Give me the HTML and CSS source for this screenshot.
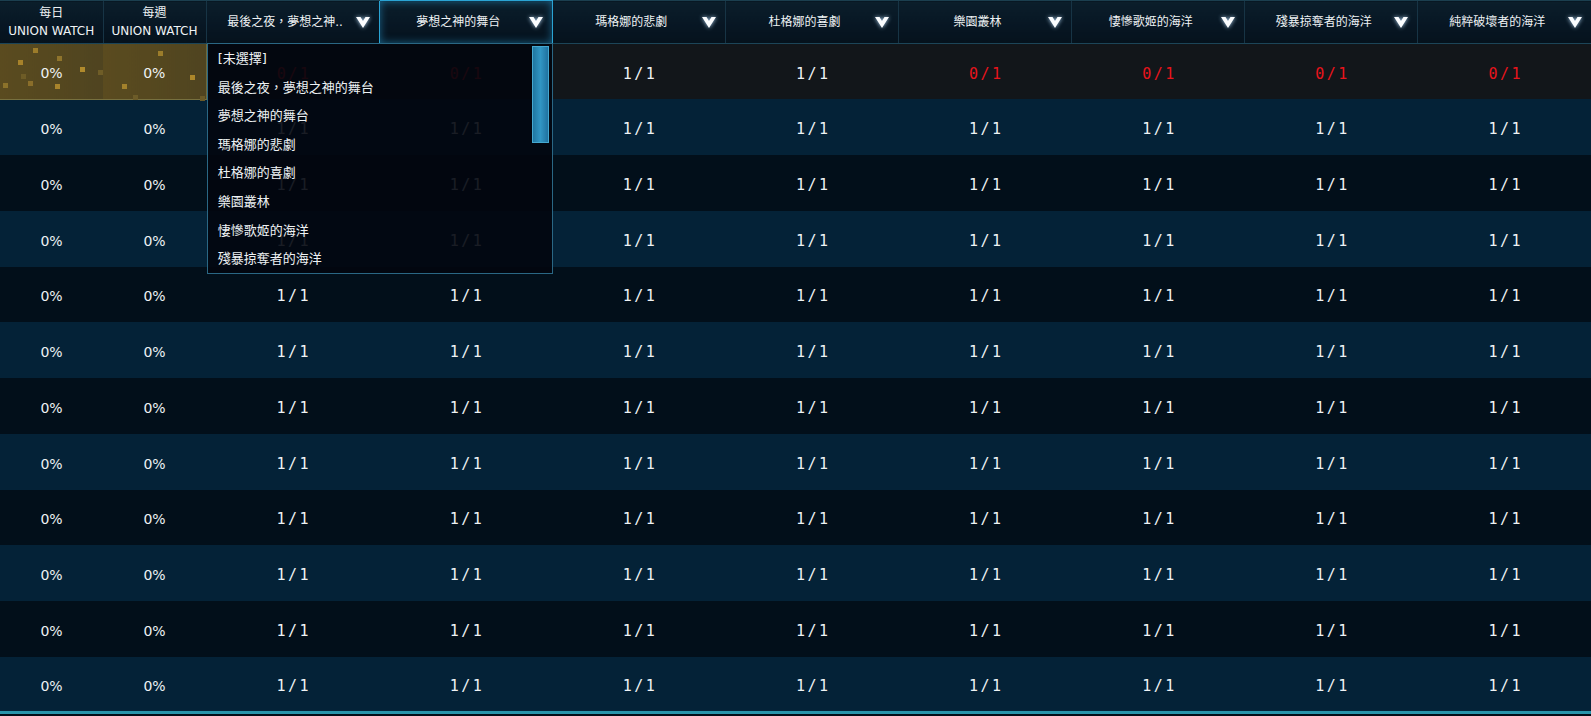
FILE: index.html
```html
<!doctype html>
<html lang="zh-Hant">
	<head>
		<meta charset="utf-8">
		<link rel="stylesheet" href="styles.css">
		<title>Union Watch</title>
	</head>
	<body>
		<div class="board">
			<table class="watch">
				<colgroup>
					<col class="col-small">
					<col class="col-small">
					<col><col><col><col><col><col><col><col>
				</colgroup>
				<thead>
					<tr>
						<th><div class="head two-line"><span>每日</span><span>UNION WATCH</span></div></th>
						<th><div class="head two-line"><span>每週</span><span>UNION WATCH</span></div></th>
						<th><div class="head"><span class="label">最後之夜，夢想之神..</span><svg class="arrow" viewBox="0 0 13 10"><path d="M0 0H4.2L6.5 3.6L8.8 0H13L6.5 10Z"/></svg></div></th>
						<th class="active">
							<div class="head"><span class="label">夢想之神的舞台</span><svg class="arrow" viewBox="0 0 13 10"><path d="M0 0H4.2L6.5 3.6L8.8 0H13L6.5 10Z"/></svg></div>
							<div class="menu">
								<div class="option">[未選擇]</div>
								<div class="option">最後之夜，夢想之神的舞台</div>
								<div class="option">夢想之神的舞台</div>
								<div class="option">瑪格娜的悲劇</div>
								<div class="option">杜格娜的喜劇</div>
								<div class="option">樂園叢林</div>
								<div class="option">悽慘歌姬的海洋</div>
								<div class="option">殘暴掠奪者的海洋</div>
								<div class="scroll-thumb"></div>
							</div>
						</th>
						<th><div class="head"><span class="label">瑪格娜的悲劇</span><svg class="arrow" viewBox="0 0 13 10"><path d="M0 0H4.2L6.5 3.6L8.8 0H13L6.5 10Z"/></svg></div></th>
						<th><div class="head"><span class="label">杜格娜的喜劇</span><svg class="arrow" viewBox="0 0 13 10"><path d="M0 0H4.2L6.5 3.6L8.8 0H13L6.5 10Z"/></svg></div></th>
						<th><div class="head"><span class="label">樂園叢林</span><svg class="arrow" viewBox="0 0 13 10"><path d="M0 0H4.2L6.5 3.6L8.8 0H13L6.5 10Z"/></svg></div></th>
						<th><div class="head"><span class="label">悽慘歌姬的海洋</span><svg class="arrow" viewBox="0 0 13 10"><path d="M0 0H4.2L6.5 3.6L8.8 0H13L6.5 10Z"/></svg></div></th>
						<th><div class="head"><span class="label">殘暴掠奪者的海洋</span><svg class="arrow" viewBox="0 0 13 10"><path d="M0 0H4.2L6.5 3.6L8.8 0H13L6.5 10Z"/></svg></div></th>
						<th><div class="head"><span class="label">純粹破壞者的海洋</span><svg class="arrow" viewBox="0 0 13 10"><path d="M0 0H4.2L6.5 3.6L8.8 0H13L6.5 10Z"/></svg></div></th>
					</tr>
				</thead>
				<tbody>
					<tr class="current">
						<td class="pct gold dots">0%</td><td class="pct gold">0%</td>
						<td class="miss">0/1</td><td class="miss">0/1</td><td>1/1</td><td>1/1</td>
						<td class="miss">0/1</td><td class="miss">0/1</td><td class="miss">0/1</td><td class="miss">0/1</td>
					</tr>
					<tr><td class="pct">0%</td><td class="pct">0%</td><td>1/1</td><td>1/1</td><td>1/1</td><td>1/1</td><td>1/1</td><td>1/1</td><td>1/1</td><td>1/1</td></tr>
					<tr><td class="pct">0%</td><td class="pct">0%</td><td>1/1</td><td>1/1</td><td>1/1</td><td>1/1</td><td>1/1</td><td>1/1</td><td>1/1</td><td>1/1</td></tr>
					<tr><td class="pct">0%</td><td class="pct">0%</td><td>1/1</td><td>1/1</td><td>1/1</td><td>1/1</td><td>1/1</td><td>1/1</td><td>1/1</td><td>1/1</td></tr>
					<tr><td class="pct">0%</td><td class="pct">0%</td><td>1/1</td><td>1/1</td><td>1/1</td><td>1/1</td><td>1/1</td><td>1/1</td><td>1/1</td><td>1/1</td></tr>
					<tr><td class="pct">0%</td><td class="pct">0%</td><td>1/1</td><td>1/1</td><td>1/1</td><td>1/1</td><td>1/1</td><td>1/1</td><td>1/1</td><td>1/1</td></tr>
					<tr><td class="pct">0%</td><td class="pct">0%</td><td>1/1</td><td>1/1</td><td>1/1</td><td>1/1</td><td>1/1</td><td>1/1</td><td>1/1</td><td>1/1</td></tr>
					<tr><td class="pct">0%</td><td class="pct">0%</td><td>1/1</td><td>1/1</td><td>1/1</td><td>1/1</td><td>1/1</td><td>1/1</td><td>1/1</td><td>1/1</td></tr>
					<tr><td class="pct">0%</td><td class="pct">0%</td><td>1/1</td><td>1/1</td><td>1/1</td><td>1/1</td><td>1/1</td><td>1/1</td><td>1/1</td><td>1/1</td></tr>
					<tr><td class="pct">0%</td><td class="pct">0%</td><td>1/1</td><td>1/1</td><td>1/1</td><td>1/1</td><td>1/1</td><td>1/1</td><td>1/1</td><td>1/1</td></tr>
					<tr><td class="pct">0%</td><td class="pct">0%</td><td>1/1</td><td>1/1</td><td>1/1</td><td>1/1</td><td>1/1</td><td>1/1</td><td>1/1</td><td>1/1</td></tr>
					<tr><td class="pct">0%</td><td class="pct">0%</td><td>1/1</td><td>1/1</td><td>1/1</td><td>1/1</td><td>1/1</td><td>1/1</td><td>1/1</td><td>1/1</td></tr>
				</tbody>
			</table>
		</div>
	</body>
</html>
```

FILE: styles.css
```css
body {
	background: #020d17;
	color: #eef2f4;
	font: 14px/1.2 'DejaVu Sans', 'Noto Sans CJK TC', sans-serif;
	margin: 0;
	overflow: hidden;
}

.board {
	width: 1591px;
}

table {
	border-collapse: collapse;
	border-spacing: 0;
}

.watch {
	border-bottom: 3px solid #2894aa;
	table-layout: fixed;
	width: 100%;
}

.col-small {
	width: 103px;
}

/* header */

.watch thead th {
	background: linear-gradient(#0b1e2b, #071623 60%, #05121c);
	border-left: 1px solid #173445;
	border-bottom: 1px solid #1c4558;
	border-top: 1px solid #1b3f4f;
	font-size: 12px;
	font-weight: normal;
	height: 41px;
	padding: 0;
	position: relative;
}

.watch thead th:first-child {
	border-left: 0;
}

.head {
	align-items: center;
	display: flex;
	height: 41px;
	padding: 1px 9px 0 14px;
}

.two-line {
	flex-direction: column;
	justify-content: center;
	gap: 4px;
	padding: 0;
}

.label {
	flex: 1;
	text-align: center;
	white-space: nowrap;
}

.arrow {
	fill: #fbfdff;
	filter: drop-shadow(0 0 2px rgba(190, 225, 255, .9));
	height: 11px;
	margin-left: 6px;
	width: 14px;
}

.watch thead th.active {
	border: 1px solid #2aa4d4;
	box-shadow: inset 0 0 9px rgba(40, 160, 220, .55);
}

/* dropdown menu */

.menu {
	background: rgba(2, 6, 14, .9);
	border: 1px solid #2a6784;
	height: 229px;
	left: -173px;
	overflow: hidden;
	position: absolute;
	text-align: left;
	top: 42px;
	width: 344px;
	z-index: 5;
}

.option {
	font-size: 13px;
	height: 28.6px;
	line-height: 29px;
	padding-left: 10px;
	white-space: nowrap;
}

.scroll-thumb {
	background: linear-gradient(90deg, #1f76a0, #3196c4 50%, #2072a0);
	border: 1px solid #45a8d0;
	height: 95px;
	position: absolute;
	right: 3px;
	top: 2px;
	width: 15px;
}

/* body */

.watch tbody tr {
	height: 55.75px;
}

.watch tbody td {
	font: 15px 'DejaVu Sans Mono', monospace;
	letter-spacing: 2.5px;
	padding: 4px 0 0 2.5px;
	text-align: center;
}

.watch tbody td.pct {
	font: 14px 'DejaVu Sans', sans-serif;
	letter-spacing: 0;
	padding-left: 0;
}

.watch tbody tr:nth-child(odd) {
	background: #020f1a;
}

.watch tbody tr:nth-child(even) {
	background: #042237;
}

.watch tbody tr.current {
	background: #12161a;
}

.miss {
	color: #e8141c;
}

.gold {
	background: linear-gradient(90deg, #5a4b1f, #54471f 60%, #4f4420);
	border-bottom: 1px solid #77703f;
	border-top: 1px solid #857a45;
}

.gold + .gold {
	border-right: 1px solid #6e6a3e;
}

.dots {
	position: relative;
}

.dots:before {
	box-shadow:
		33px 4px 0 0 #9c7c2a,
		18px 16px 0 0 #a7822a,
		57px 12px 0 0 #8f742c,
		80px 23px 0 0 #b08a2c,
		55px 40px 0 0 #a8842b,
		28px 37px 0 0 #8a6e2a,
		21px 30px 0 0 #6e5c26,
		98px 26px 0 0 #6f5d27,
		158px 7px 0 0 #9c7d2b,
		190px 31px 0 0 #ad872a,
		122px 40px 0 0 #a3812b,
		133px 51px 0 0 #6d5c28,
		200px 52px 0 0 #6a5a27,
		3px 39px 0 0 #8c722a;
	content: "";
	height: 5px;
	left: 0;
	position: absolute;
	top: 0;
	width: 5px;
}
```
